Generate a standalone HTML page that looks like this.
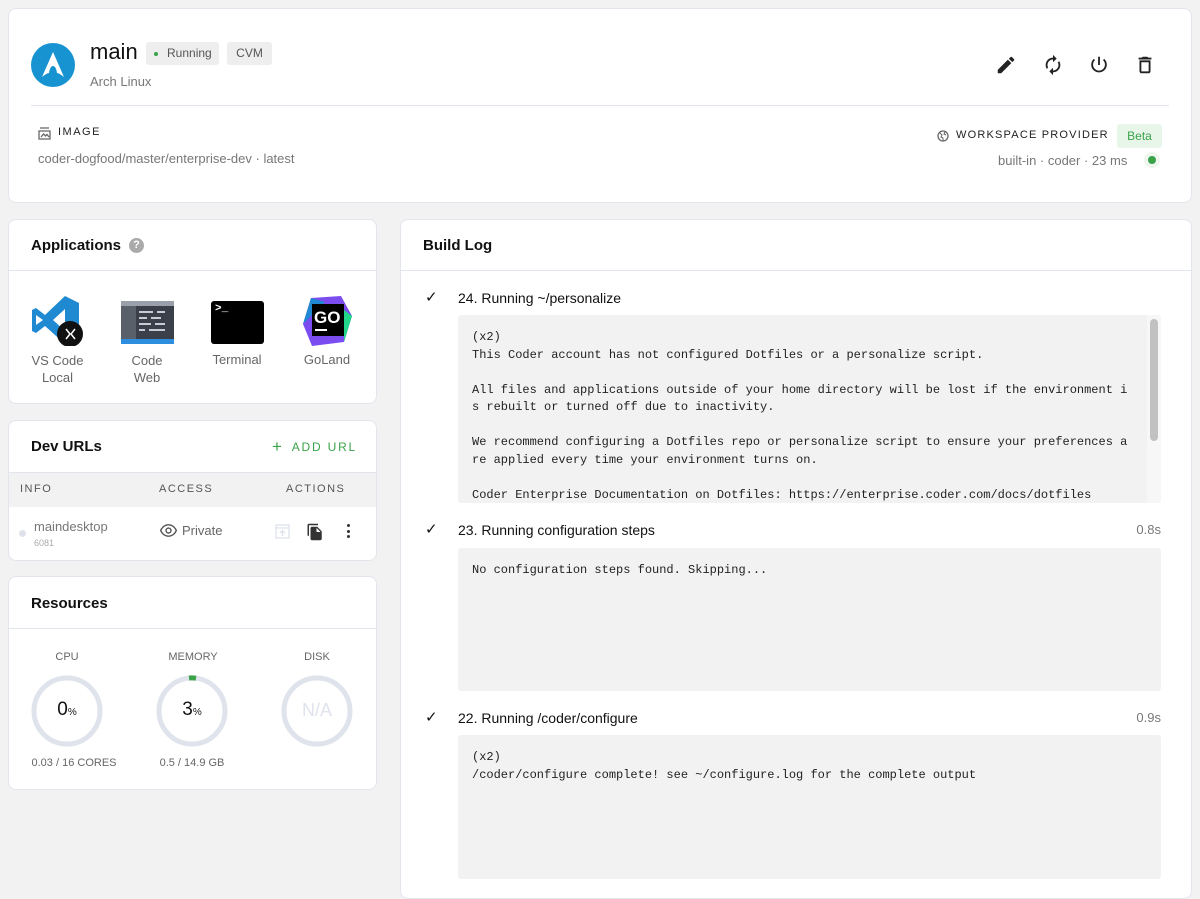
<!DOCTYPE html>
<html><head><meta charset="utf-8"><style>
*{box-sizing:border-box;margin:0;padding:0}
body{width:1200px;height:888px;overflow:hidden;background:#f2f2f2;font-family:"Liberation Sans",sans-serif;color:#111;position:relative}
.card{position:absolute;background:#fff;border:1px solid #e2e5ec;border-radius:8px}
.abs{position:absolute}
.gray{color:#777}
.mono{font-family:"Liberation Mono",monospace;font-size:12px;line-height:17.5px;color:#222;white-space:pre}
.logbox{position:absolute;left:57px;width:703px;background:#f2f2f2;border-radius:3px;padding:14px 14px}
.hdr{font-size:15px;font-weight:bold;color:#111}
.lbl{font-size:11px;letter-spacing:1.5px;color:#555}
</style></head><body>

<!-- top card -->
<div class="card" style="left:8px;top:8px;width:1184px;height:195px">
  <svg class="abs" style="left:21px;top:33px" width="46" height="46" viewBox="0 0 46 46"><circle cx="23" cy="23" r="22" fill="#1793d1"/><path d="M23 10 L34 35 Q29 31 27 31 Q26 24 23 24 Q20 24 19 31 Q17 31 12 35 Z" fill="#fff"/></svg>
  <div class="abs" style="left:81px;top:30px;font-size:22px">main</div>
  <div class="abs" style="left:137px;top:33px;height:23px;width:73px;background:#eee;border-radius:3px;font-size:12px;color:#555;line-height:23px;padding-left:21px"><span class="abs" style="left:8px;top:10px;width:4px;height:4px;border-radius:2px;background:#3aa34a"></span>Running</div>
  <div class="abs" style="left:218px;top:33px;height:23px;width:45px;background:#eee;border-radius:3px;font-size:12px;color:#555;line-height:23px;text-align:center">CVM</div>
  <div class="abs gray" style="left:81px;top:65px;font-size:13px">Arch Linux</div>
  <div class="abs" style="left:22px;top:96px;width:1138px;height:1px;background:#e2e5ec"></div>
  <svg class="abs" style="left:29px;top:118px" width="13" height="13" viewBox="0 0 13 13" fill="none" stroke="#666" stroke-width="1.3"><path d="M2 1h9M1 4h11v8H1z"/><path d="M3 10l2.5-3 2 2 1.5-1.5 2 2.5" /></svg>
  <div class="abs lbl" style="left:49px;top:117px;color:#222">IMAGE</div>
  <div class="abs gray" style="left:29px;top:142px;font-size:13px">coder-dogfood/master/enterprise-dev · latest</div>
  <svg class="abs" style="left:986px;top:45px" width="22" height="22" viewBox="0 0 24 24" fill="#222"><path d="M3 17.25V21h3.75L17.81 9.94l-3.75-3.75L3 17.25zM20.71 7.04a1 1 0 000-1.41l-2.34-2.34a1 1 0 00-1.41 0l-1.83 1.83 3.75 3.75 1.83-1.83z"/></svg>
  <svg class="abs" style="left:1033px;top:45px" width="22" height="22" viewBox="0 0 24 24" fill="#222"><path d="M12 6v3l4-4-4-4v3c-4.42 0-8 3.58-8 8 0 1.57.46 3.03 1.24 4.26L6.7 14.8A5.870 5.870 0 016 12c0-3.31 2.690-6 6-6zm6.760 1.740L17.3 9.2c.44.84.7 1.79.7 2.8 0 3.31-2.69 6-6 6v-3l-4 4 4 4v-3c4.42 0 8-3.58 8-8 0-1.570-.46-3.03-1.24-4.26z"/></svg>
  <svg class="abs" style="left:1079px;top:45px" width="22" height="22" viewBox="0 0 24 24" fill="none" stroke="#222" stroke-width="2"><path d="M12 3v9"/><path d="M7 6a7.5 7.5 0 1010 0"/></svg>
  <svg class="abs" style="left:1125px;top:45px" width="22" height="22" viewBox="0 0 24 24" fill="#222"><path d="M6 19c0 1.1.9 2 2 2h8c1.1 0 2-.9 2-2V7H6v12zM8 9h8v10H8V9zm7.5-5l-1-1h-5l-1 1H5v2h14V4z"/></svg>
  <svg class="abs" style="left:928px;top:121px" width="12" height="12" viewBox="0 0 12 12"><circle cx="6" cy="6" r="5" fill="none" stroke="#666" stroke-width="1.3"/><path d="M3 3l2 2-1 2 2 1v3M8 2l-1 2 2 1" stroke="#666" fill="none"/></svg>
  <div class="abs lbl" style="left:947px;top:120px;color:#222;letter-spacing:1.2px">WORKSPACE PROVIDER</div>
  <div class="abs" style="left:1108px;top:115px;width:45px;height:24px;background:#e8f5e9;border-radius:3px;color:#3aa34a;font-size:12px;line-height:24px;text-align:center">Beta</div>
  <div class="abs gray" style="left:989px;top:144px;font-size:13px">built-in · coder · 23 ms</div>
  <div class="abs" style="left:1135px;top:143px;width:16px;height:16px;border-radius:8px;background:#eef6ee"><div style="margin:4px;width:8px;height:8px;border-radius:4px;background:#3aa34a"></div></div>
</div>

<!-- Applications -->
<div class="card" style="left:8px;top:219px;width:369px;height:185px">
  <div class="abs hdr" style="left:22px;top:17px">Applications</div>
  <div class="abs" style="left:120px;top:18px;width:15px;height:15px;border-radius:8px;background:#aaa;color:#fff;font-size:11px;font-weight:bold;text-align:center;line-height:15px">?</div>
  <div class="abs" style="left:0;top:50px;width:367px;height:1px;background:#e2e5ec"></div>
  <svg class="abs" style="left:22px;top:76px" width="54" height="50" viewBox="0 0 54 50"><path d="M34 0l14 7v34l-14 7-20-18-9 7-4-2V14l4-2 9 7z" fill="#1f8ad2"/><path d="M34 13v22l-12-11z" fill="#fff"/><path d="M5 19l7 5-7 5z" fill="#fff"/><circle cx="39" cy="38" r="13" fill="#111"/><path d="M35 33l4 5-4 5M44 33l-4 5 4 5" stroke="#fff" stroke-width="1.5" fill="none"/></svg>
  <div class="abs gray" style="left:20px;top:132px;width:57px;text-align:center;font-size:13px;line-height:17px;color:#666">VS Code Local</div>
  <svg class="abs" style="left:112px;top:81px" width="53" height="43" viewBox="0 0 53 43"><rect width="53" height="43" rx="2" fill="#3a3f4a"/><rect width="53" height="5" fill="#9aa0aa"/><rect x="0" y="5" width="15" height="34" fill="#5a606a"/><rect y="38" width="53" height="5" fill="#2d8ee0"/><g fill="#c7cbd2"><rect x="18" y="10" width="14" height="2"/><rect x="36" y="10" width="8" height="2"/><rect x="18" y="16" width="8" height="2"/><rect x="30" y="16" width="10" height="2"/><rect x="18" y="22" width="12" height="2"/><rect x="34" y="22" width="10" height="2"/><rect x="18" y="28" width="6" height="2"/><rect x="28" y="28" width="16" height="2"/></g></svg>
  <div class="abs" style="left:108px;top:132px;width:60px;text-align:center;font-size:13px;line-height:17px;color:#666">Code Web</div>
  <div class="abs" style="left:202px;top:81px;width:53px;height:43px;background:#000;border-radius:3px"><div style="color:#fff;font-family:'Liberation Mono',monospace;font-size:11px;font-weight:bold;padding:2px 0 0 4px">&gt;_</div></div>
  <div class="abs" style="left:198px;top:132px;width:60px;text-align:center;font-size:13px;color:#666">Terminal</div>
  <svg class="abs" style="left:294px;top:76px" width="49" height="50" viewBox="0 0 49 50"><path d="M8 2l30-2 11 20-8 26-32 4L0 28z" fill="#7b4cf0"/><path d="M0 28L8 2l14 4z" fill="#1f8ad2"/><path d="M41 46l8-26-8-6z" fill="#21d789"/><rect x="9" y="8" width="32" height="32" fill="#000"/><text x="11" y="27" font-family="Liberation Sans" font-weight="bold" font-size="17" fill="#fff">GO</text><rect x="12" y="33" width="12" height="2" fill="#fff"/></svg>
  <div class="abs" style="left:288px;top:132px;width:60px;text-align:center;font-size:13px;color:#666">GoLand</div>
</div>

<!-- Dev URLs -->
<div class="card" style="left:8px;top:420px;width:369px;height:141px">
  <div class="abs hdr" style="left:22px;top:17px">Dev URLs</div>
  <div class="abs" style="left:263px;top:15px;color:#3aa34a;font-size:12px;letter-spacing:1.8px"><span style="font-size:17px;position:relative;top:1px;margin-right:8px">+</span>ADD URL</div>
  <div class="abs" style="left:0;top:51px;width:367px;height:35px;background:#f2f2f2;border-top:1px solid #e2e5ec"></div>
  <div class="abs lbl" style="left:11px;top:62px">INFO</div>
  <div class="abs lbl" style="left:150px;top:62px">ACCESS</div>
  <div class="abs lbl" style="left:277px;top:62px">ACTIONS</div>
  <div class="abs" style="left:10px;top:109px;width:7px;height:7px;border-radius:4px;background:#dfe2ea"></div>
  <div class="abs" style="left:25px;top:98px;font-size:13px;color:#777">maindesktop</div>
  <div class="abs" style="left:25px;top:117px;font-size:9px;color:#aaa">6081</div>
  <svg class="abs" style="left:151px;top:103px" width="17" height="13" viewBox="0 0 24 18"><path d="M12 1C6 1 2 6 1 9c1 3 5 8 11 8s10-5 11-8c-1-3-5-8-11-8z" fill="none" stroke="#555" stroke-width="2"/><circle cx="12" cy="9" r="3.5" fill="none" stroke="#555" stroke-width="2"/></svg>
  <div class="abs" style="left:173px;top:102px;font-size:13px;color:#666">Private</div>
  <svg class="abs" style="left:266px;top:103px" width="15" height="15" viewBox="0 0 15 15" fill="none" stroke="#dde2ea" stroke-width="1.3"><rect x="1" y="1" width="13" height="13"/><path d="M1 4h13M7.5 12V7M5 9l2.5-2.5L10 9"/></svg>
  <svg class="abs" style="left:297px;top:101px" width="18" height="20" viewBox="0 0 24 24" fill="#333"><path d="M16 1H4c-1.1 0-2 .9-2 2v14h2V3h12V1zm-1 4l6 6v10c0 1.1-.9 2-2 2H7.99C6.89 23 6 22.1 6 21l.01-14c0-1.1.89-2 1.99-2h7zm-1 7h5.5L14 6.5V12z"/></svg>
  <div class="abs" style="left:338px;top:103px;width:3px"><div style="width:3px;height:3px;border-radius:2px;background:#333;margin-bottom:2.5px"></div><div style="width:3px;height:3px;border-radius:2px;background:#333;margin-bottom:2.5px"></div><div style="width:3px;height:3px;border-radius:2px;background:#333"></div></div>
</div>

<!-- Resources -->
<div class="card" style="left:8px;top:576px;width:369px;height:214px">
  <div class="abs hdr" style="left:22px;top:18px">Resources</div>
  <div class="abs" style="left:0;top:51px;width:367px;height:1px;background:#e2e5ec"></div>
  <div class="abs" style="left:22px;top:74px;width:72px;text-align:center;font-size:11px;color:#666">CPU</div>
  <div class="abs" style="left:134px;top:74px;width:100px;text-align:center;font-size:11px;color:#666">MEMORY</div>
  <div class="abs" style="left:272px;top:74px;width:72px;text-align:center;font-size:11px;color:#666">DISK</div>
  <svg class="abs" style="left:22px;top:98px" width="72" height="72"><circle cx="36" cy="36" r="33" fill="none" stroke="#dfe3ec" stroke-width="5"/></svg>
  <svg class="abs" style="left:147px;top:98px" width="72" height="72"><circle cx="36" cy="36" r="33" fill="none" stroke="#dfe3ec" stroke-width="5"/><path d="M33 3 A33 33 0 0 1 40 3.2" stroke="#3aa34a" stroke-width="5" fill="none"/></svg>
  <svg class="abs" style="left:272px;top:98px" width="72" height="72"><circle cx="36" cy="36" r="33" fill="none" stroke="#dfe3ec" stroke-width="5"/></svg>
  <div class="abs" style="left:22px;top:122px;width:72px;text-align:center;font-size:19px">0<span style="font-size:10px">%</span></div>
  <div class="abs" style="left:147px;top:122px;width:72px;text-align:center;font-size:19px">3<span style="font-size:10px">%</span></div>
  <div class="abs" style="left:272px;top:123px;width:72px;text-align:center;font-size:18px;color:#dfe3ec">N/A</div>
  <div class="abs" style="left:10px;top:180px;width:110px;text-align:center;font-size:11px;color:#666">0.03 / 16 CORES</div>
  <div class="abs" style="left:133px;top:180px;width:100px;text-align:center;font-size:11px;color:#666">0.5 / 14.9 GB</div>
</div>

<!-- Build log -->
<div class="card" style="left:400px;top:219px;width:792px;height:680px">
  <div class="abs hdr" style="left:22px;top:17px">Build Log</div>
  <div class="abs" style="left:0;top:50px;width:790px;height:1px;background:#e2e5ec"></div>

  <div class="abs" style="left:24px;top:68px;font-size:15px">✓</div>
  <div class="abs" style="left:57px;top:70px;font-size:14px">24. Running ~/personalize</div>
  <div class="logbox" style="top:95px;height:188px;overflow:hidden"><div class="mono">(x2)
This Coder account has not configured Dotfiles or a personalize script.

All files and applications outside of your home directory will be lost if the environment i
s rebuilt or turned off due to inactivity.

We recommend configuring a Dotfiles repo or personalize script to ensure your preferences a
re applied every time your environment turns on.

Coder Enterprise Documentation on Dotfiles: https://enterprise.coder.com/docs/dotfiles</div>
  <div class="abs" style="right:0;top:0;width:14px;height:188px;background:#f7f7f7"></div>
  <div class="abs" style="right:3px;top:4px;width:8px;height:122px;border-radius:4px;background:#c1c1c1"></div>
  </div>

  <div class="abs" style="left:24px;top:300px;font-size:15px">✓</div>
  <div class="abs" style="left:57px;top:302px;font-size:14px">23. Running configuration steps</div>
  <div class="abs gray" style="left:720px;top:302px;width:40px;text-align:right;font-size:13px">0.8s</div>
  <div class="logbox" style="top:328px;height:143px"><div class="mono">No configuration steps found. Skipping...</div></div>

  <div class="abs" style="left:24px;top:488px;font-size:15px">✓</div>
  <div class="abs" style="left:57px;top:490px;font-size:14px">22. Running /coder/configure</div>
  <div class="abs gray" style="left:720px;top:490px;width:40px;text-align:right;font-size:13px">0.9s</div>
  <div class="logbox" style="top:515px;height:144px"><div class="mono">(x2)
/coder/configure complete! see ~/configure.log for the complete output</div></div>
</div>
</body></html>
